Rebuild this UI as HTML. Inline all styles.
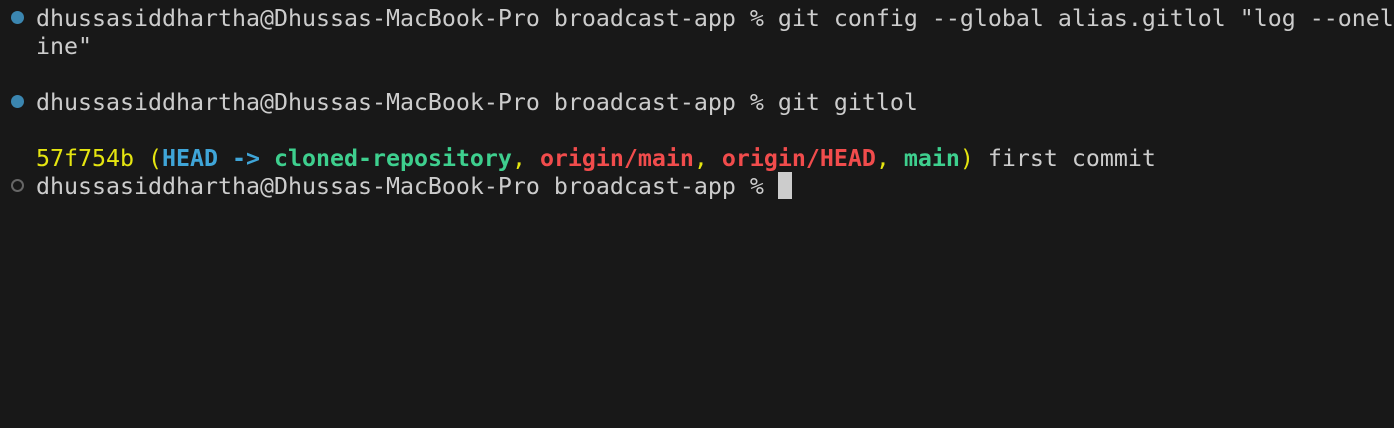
<!DOCTYPE html>
<html><head><style>
body{margin:0;background:#181818;width:1394px;height:428px;overflow:hidden;}
.t{position:absolute;left:36px;top:5px;font-family:"DejaVu Sans Mono","Liberation Mono",monospace;font-size:23.26px;line-height:28px;color:#cccccc;white-space:pre;}
.y{color:#e5e510}.b{color:#3fa5d8;font-weight:bold}.g{color:#3ecf8e;font-weight:bold}.r{color:#f14c4c;font-weight:bold}
.dot{position:absolute;width:13px;height:13px;border-radius:50%;background:#3b86b0;left:11px}
.o{position:absolute;width:9px;height:9px;border-radius:50%;border:2px solid #666;left:11px}
.cur{position:absolute;left:778px;top:172px;width:14px;height:27px;background:#cccccc}
</style></head><body>
<div class="dot" style="top:11px"></div>
<div class="dot" style="top:95px"></div>
<div class="o" style="top:179px"></div>
<div class="t">dhussasiddhartha@Dhussas-MacBook-Pro broadcast-app % git config --global alias.gitlol "log --onel
ine"

dhussasiddhartha@Dhussas-MacBook-Pro broadcast-app % git gitlol

<span class="y">57f754b (</span><span class="b">HEAD -&gt; </span><span class="g">cloned-repository</span><span class="y">, </span><span class="r">origin/main</span><span class="y">, </span><span class="r">origin/HEAD</span><span class="y">, </span><span class="g">main</span><span class="y">)</span> first commit
dhussasiddhartha@Dhussas-MacBook-Pro broadcast-app % </div>
<div class="cur"></div>
</body></html>
